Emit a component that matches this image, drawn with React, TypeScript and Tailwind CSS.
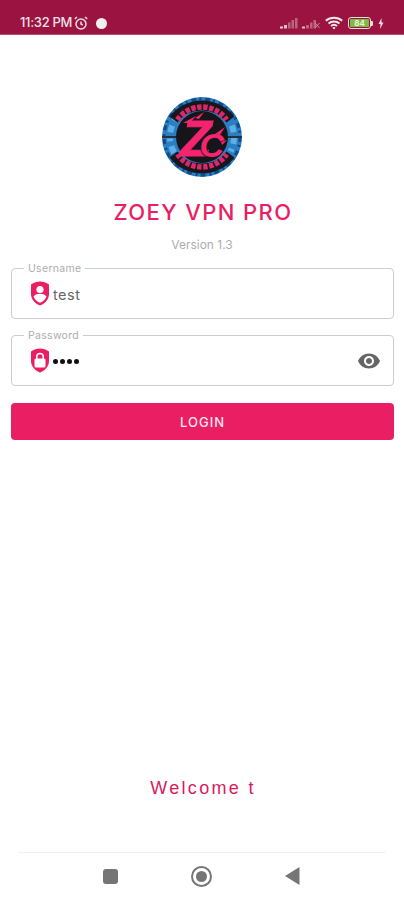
import React from "react";

function StatusBar() {
  return (
    <div className="flex h-[35px] items-center justify-between border-b border-[#b8506f] bg-[#9b1340] pl-5 pr-[20px] pt-[12px] font-['Inter',sans-serif]">
      <div className="flex items-center">
        <span className="text-[13px] font-medium tracking-[-0.3px] text-[#ece2e6]">11:32 PM</span>
        <svg width="16" height="16" viewBox="0 0 16 16" className="ml-[1px]" fill="none" stroke="#e8dde1" strokeWidth="1.5">
          <circle cx="8" cy="9" r="5" />
          <path d="M8 6.5V9l1.7 1M1.8 3.8 4 2M14.2 3.800 12 2" />
        </svg>
        <span className="ml-[7px] h-[11px] w-[11px] rounded-full bg-[#f4eef0]" />
      </div>
      <div className="flex items-center">
        <svg width="18" height="12" viewBox="0 0 18 12" fill="#b8677f">
          <rect x="0" y="9.500" width="3" height="2" fill="#e5d5da" />
          <rect x="4" y="8" width="3" height="3.500" fill="#d9c2ca" />
          <rect x="8" y="5.500" width="2.500" height="6" />
          <rect x="11.500" y="3" width="2.500" height="8.500" />
          <rect x="15" y="1" width="2.500" height="10.500" />
        </svg>
        <svg width="18" height="12" viewBox="0 0 18 12" fill="#b8677f" className="ml-[4px]">
          <rect x="0" y="9.500" width="3" height="2" fill="#d9c2ca" />
          <rect x="4" y="8" width="3" height="3.500" />
          <rect x="8" y="5.500" width="2.500" height="6" />
          <rect x="11.500" y="3" width="2.500" height="8.500" />
          <path d="M13 6l4.500 5M17.500 6 13 11" stroke="#c98da2" />
        </svg>
        <svg width="18" height="14" viewBox="0 0 18 14" fill="none" stroke="#f3e9ed" strokeWidth="1.900" className="ml-[5px]">
          <path d="M.8 4.800c4.700-4 11.700-4 16.400 0" />
          <path d="M3.500 7.500c3-2.700 8-2.700 11 0" />
          <path d="M6 10c1.700-1.500 4.300-1.500 6 0" />
          <path d="M8 12.400c.6-.5 1.400-.5 2 0" />
        </svg>
        <div className="ml-[5px] flex items-center">
          <div className="flex h-[12px] w-[23px] items-center justify-center rounded-[3px] border border-[#e8dde1] p-[1px]">
            <div className="flex h-full w-full items-center justify-center rounded-[1px] bg-[#7dbb3c]">
              <span className="text-[8px] font-bold leading-none text-[#eaf5df]">84</span>
            </div>
          </div>
          <div className="h-[5px] w-[2px] rounded-r-[1px] bg-[#e8dde1]" />
        </div>
        <svg width="6" height="11" viewBox="0 0 6 11" fill="#e8dde1" className="ml-[5px]">
          <path d="M3.500 0 .5 6h2L2 11l3.500-6.500h-2z" />
        </svg>
      </div>
    </div>
  );
}

// ring lettering is unreadable at this size in the reference, so it is drawn as pink marks
function Logo() {
  return (
    <svg width="82" height="82" viewBox="0 0 82 82">
      <circle cx="41" cy="41" r="40" fill="#2a7fc4" />
      <circle cx="41" cy="41" r="38" fill="none" stroke="#124a86" strokeWidth="3" strokeDasharray="5 3 2 4" />
      <circle cx="41" cy="41" r="32" fill="none" stroke="#5db0e4" strokeWidth="6" strokeDasharray="7 5 3 6" />
      <path d="M12.500 18.500A36 36 0 0 1 69.500 18.500" fill="none" stroke="#17171d" strokeWidth="10" transform="translate(0 5)" />
      <path d="M12.500 63.500A36 36 0 0 0 69.500 63.500" fill="none" stroke="#17171d" strokeWidth="10" transform="translate(0 -5)" />
      <circle cx="41" cy="41" r="26" fill="#16161a" />
      <path d="M1 41H15M67 41H81" stroke="#26303c" strokeWidth="2" />
      <path d="M16.400 23.800A30 30 0 0 1 65.600 23.800" fill="none" stroke="#e0266a" strokeWidth="5.500" strokeDasharray="4.300 1.700" />
      <path d="M16.400 58.200A30 30 0 0 0 65.600 58.200" fill="none" stroke="#e0266a" strokeWidth="5.500" strokeDasharray="4.300 1.700" />
      <text x="20" y="60" fontFamily="'Liberation Sans',sans-serif" fontSize="50" fontWeight="700" fontStyle="italic" fill="#f5246f" stroke="#f5246f" strokeWidth="1">
        Z<tspan dx="-12" dy="1" fontSize="34" stroke="#16161a" strokeWidth="1.600" paintOrder="stroke">C</tspan>
      </text>
      <path d="M22 27 35 20l-6 7zM34 22l9-6-5 7zM54 38l10-7-5 8zM60 46l6-2-5 5z" fill="#f5246f" />
    </svg>
  );
}

function UserShield() {
  return (
    <svg width="20" height="25" viewBox="0 0 20 25">
      <path d="M10 .5c3 0 6.500 1 9 3v9.500c0 5.500-4 9.500-9 11.500-5-2-9-6-9-11.500V3.500c2.500-2 6-3 9-3z" fill="#e91e63" />
      <circle cx="10" cy="8.500" r="3.600" fill="#fff" />
      <path d="M3.500 15.500c1.500-2 3.800-2.700 6.500-2.700s5 .7 6.500 2.700c-1 2.700-3.500 5-6.500 6.300-3-1.300-5.500-3.600-6.500-6.300z" fill="#fff" />
    </svg>
  );
}

function LockShield() {
  return (
    <svg width="20" height="25" viewBox="0 0 20 25">
      <path d="M10 .5c3 0 6.500 1 9 3v9.500c0 5.500-4 9.500-9 11.500-5-2-9-6-9-11.500V3.500c2.500-2 6-3 9-3z" fill="#e91e63" />
      <rect x="4.500" y="10.500" width="11" height="9" rx="1.500" fill="#fff" />
      <path d="M6.800 11V8.800a3.200 3.200 0 0 1 6.400 0V11" fill="none" stroke="#fff" strokeWidth="1.500" />
    </svg>
  );
}

function EyeIcon() {
  return (
    <svg width="24" height="24" viewBox="0 0 24 24" fill="#666666">
      <path d="M12 4.500C7 4.500 2.730 7.610 1 12c1.730 4.390 6 7.500 11 7.500s9.270-3.110 11-7.500c-1.730-4.390-6-7.500-11-7.500zM12 17c-2.760 0-5-2.240-5-5s2.240-5 5-5 5 2.240 5 5-2.240 5-5 5zm0-8c-1.660 0-3 1.340-3 3s1.340 3 3 3 3-1.340 3-3-1.340-3-3-3z" />
    </svg>
  );
}

function Field({ label, icon, children, right }: { label: string; icon: React.ReactNode; children: React.ReactNode; right?: React.ReactNode }) {
  return (
    <div className="relative flex h-[51px] items-center rounded-[4px] border-[1.5px] border-[#cdcdcd] pl-[18px] pr-[12px]">
      <span className="absolute left-[12px] top-[-7px] bg-white px-[4px] text-[10.500px] leading-[14px] tracking-[0.3px] text-[#adadad]">
        {label}
      </span>
      {icon}
      <div className="ml-[3px] flex-1">{children}</div>
      {right}
    </div>
  );
}

export default function App() {
  return (
    <div className="flex h-[900px] w-[404px] flex-col bg-white font-['Inter',sans-serif]">
      <StatusBar />

      <div className="flex flex-col items-center pt-[61px]">
        <Logo />
        <h1 className="mt-[20px] pl-[2px] font-['Inter',sans-serif] text-[22px] font-medium leading-[28px] tracking-[1.400px] text-[#e91e63]">
          ZOEY VPN PRO
        </h1>
        <p className="mt-[11px] text-[12px] leading-[16px] text-[#adadad]">Version 1.3</p>
      </div>

      <div className="ml-[11px] mr-[10px] mt-[15px] flex flex-col gap-[16px]">
        <Field label="Username" icon={<UserShield />}>
          <span className="block pt-[2px] text-[14.500px] tracking-[0.5px] text-[#666]">test</span>
        </Field>
        <Field label="Password" icon={<LockShield />} right={<EyeIcon />}>
          <div className="flex gap-[2px] pt-[2px]">
            <span className="h-[5px] w-[5px] rounded-full bg-[#111]" />
            <span className="h-[5px] w-[5px] rounded-full bg-[#111]" />
            <span className="h-[5px] w-[5px] rounded-full bg-[#111]" />
            <span className="h-[5px] w-[5px] rounded-full bg-[#111]" />
          </div>
        </Field>
        <button className="mt-[1px] h-[37px] rounded-[4px] bg-[#e91e63] pt-[3px] text-[13px] font-medium tracking-[1px] text-[#fde7ee]">
          LOGIN
        </button>
      </div>

      <div className="flex-1" />

      <p className="pl-[2px] text-center font-['Liberation_Sans',sans-serif] text-[18px] leading-[22px] tracking-[2.300px] text-[#d81b60]">
        Welcome t
      </p>

      <div className="mx-[18px] mt-[53px] h-[1px] bg-[#f1f1f1]" />

      <div className="flex h-[47px] items-center justify-center gap-[73px] pb-[1px] pr-[2px]">
        <div className="h-[15px] w-[15px] rounded-[3px] bg-[#757575]" />
        <div className="flex h-[21px] w-[21px] items-center justify-center rounded-full border-2 border-[#757575]">
          <div className="h-[11px] w-[11px] rounded-full bg-[#757575]" />
        </div>
        <svg width="15" height="18" viewBox="0 0 15 18" fill="#757575">
          <path d="M14.500 0v18L0 9z" />
        </svg>
      </div>
    </div>
  );
}
